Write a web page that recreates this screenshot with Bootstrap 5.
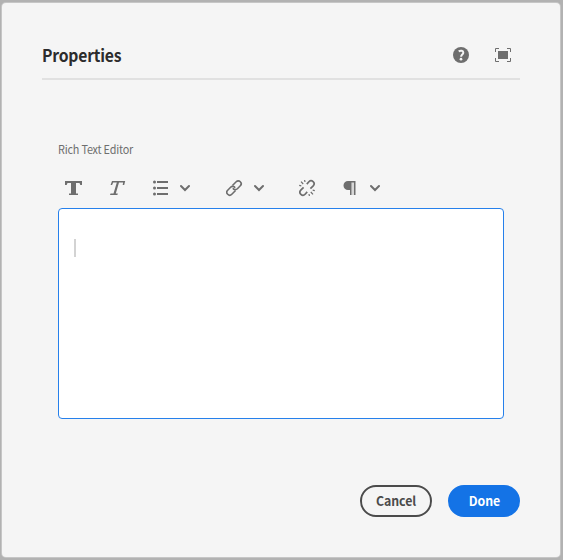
<!DOCTYPE html>
<html lang="en">
<head>
<meta charset="utf-8">
<meta name="viewport" content="width=device-width, initial-scale=1">
<title>Properties</title>
<link href="https://cdn.jsdelivr.net/npm/bootstrap@5.3.0/dist/css/bootstrap.min.css" rel="stylesheet">
<style>
body{background:#b2b2b2;font-family:"Noto Sans CJK SC","Open Sans",sans-serif;height:560px;padding:3px 3px 3px 2px;overflow:hidden}
.dialog-panel{background:#f5f5f5;border-radius:4px;height:554px;padding:29px 40px 40px;box-shadow:0 0 0 1px #c6c6c6}
.dialog-head{height:48px;border-bottom:2px solid #e1e1e1;padding-right:9px;gap:26px}
.dialog-title{font-size:16.500px;line-height:24px;font-weight:700;color:#2c2c2c;letter-spacing:-.2px;transform:scaleX(.95);transform-origin:left}
.dialog-body{padding:60px 16px 0}
.field-label{font-size:11.500px;line-height:19px;color:#6e6e6e;letter-spacing:-.2px;transform:scaleX(.94);transform-origin:left}
.tools{height:18px;margin-top:20px;padding-left:7px;color:#6e6e6e}
.tool{padding:0;border:0;background:none;color:#6e6e6e;display:flex;width:18px;height:18px}
.tool-head{width:16px}
.tool-arrow{width:10px}
.gap-a{margin-left:26px}.gap-b{margin-left:9px}.gap-c{margin-left:36px}.gap-d{margin-left:10px}.gap-e{margin-left:35px}
.ic{display:block;fill:currentColor}
.ic-line{fill:none;stroke:currentColor}
.editor{height:211px;margin-top:11px;background:#fff;border:1px solid #2680eb;border-radius:4px;padding:30px 15px}
.caret{width:2px;height:18px;background:#d3d3d3}
.actions{gap:16px}
.pill{width:72px;height:32px;border-radius:16px;border-width:2px;padding:0;font-size:13px;line-height:28px;font-weight:700;letter-spacing:-.1px}
.pill span{display:inline-block;transform:scaleX(.95)}
.pill-outline{color:#4b4b4b;border-color:#4b4b4b}
.pill-fill{color:#fff;background:#1473e6;border-color:#1473e6}
</style>
</head>
<body>
<main class="dialog-panel d-flex flex-column">
  <header class="dialog-head d-flex align-items-center">
    <h1 class="dialog-title mb-0 me-auto">Properties</h1>
    <button class="tool tool-head" aria-label="Help"><svg class="ic" width="16" height="18" viewBox="0 0 16 18"><circle cx="8" cy="9" r="8"/><path d="M5.700 5.400C7.600 4.100 10.400 4.700 10.300 6.700c0 1.800-2.200 2-2.200 4" fill="none" stroke="#f5f5f5" stroke-width="2"/><circle cx="8" cy="13.200" r="1.350" fill="#f5f5f5"/></svg></button>
    <button class="tool tool-head" aria-label="Full screen"><svg class="ic" width="16" height="18" viewBox="0 0 16 18"><path d="M3 5h10v8H3z"/><path class="ic-line" d="M.5 6V2.500H4M12 2.500h3.500V6M15.500 12v3.500H12M4 15.500H.5V12"/></svg></button>
  </header>
  <section class="dialog-body">
    <div class="field-label">Rich Text Editor</div>
    <div class="tools d-flex align-items-center">
      <button class="tool" aria-label="Bold"><svg class="ic" width="18" height="18"><path d="M0 2h17v4h-1.700L14.500 4H11v10.500h2V16H4v-1.500h2V4H2.500L1.700 6H0z"/></svg></button>
      <button class="tool gap-a" aria-label="Italic"><svg class="ic" width="18" height="18"><path d="M3 2h13.200L15.200 6h-1.500l.4-2.400H10L6.800 14.500h2L8.400 16H1l.5-1.500h3L7.800 3.600H4.200L3.100 6H1.600z"/></svg></button>
      <button class="tool gap-a" aria-label="List"><svg class="ic" width="18" height="18"><path d="M4 2h11v2H4zM4 8h11v2H4zM4 14h11v2H4z"/><circle cx="1.500" cy="3" r="1.500"/><circle cx="1.500" cy="9" r="1.500"/><circle cx="1.500" cy="15" r="1.500"/></svg></button>
      <button class="tool tool-arrow gap-b" aria-label="List options"><svg class="ic ic-line" width="10" height="18"><path d="M1 7l4 4 4-4" stroke-width="2" stroke-linecap="round"/></svg></button>
      <button class="tool gap-c" aria-label="Link"><svg class="ic ic-line" width="18" height="18"><g transform="rotate(-45 8 9)" stroke-width="1.600"><path d="M7 10.900H1.700a2.900 2.900 0 0 1 0-5.800h4.100a2.900 2.900 0 0 1 2.900 3.500" transform="translate(.3 1)"/><path d="M9 7.100h5.300a2.900 2.900 0 0 1 0 5.800h-4.100a2.900 2.900 0 0 1-2.900-3.500" transform="translate(-.3 -1)"/></g></svg></button>
      <button class="tool tool-arrow gap-d" aria-label="Link options"><svg class="ic ic-line" width="10" height="18"><path d="M1 7l4 4 4-4" stroke-width="2" stroke-linecap="round"/></svg></button>
      <button class="tool gap-e" aria-label="Unlink"><svg class="ic ic-line" width="18" height="18"><path stroke-width="1.700" d="M7.800 5.100l2.100-2.300a2.950 2.950 0 0 1 4.300 4.100L11.400 9.700M8.200 12.900l-2.100 2.300a2.950 2.950 0 0 1-4.300-4.100L4.600 8.300"/><path stroke-width="1.200" d="M5.600 1l.4 2M2 2.700l2.200 2.300M.2 6.400l2.100.4M10.400 17l-.4-2M14 15.300l-2.200-2.300M15.800 11.600l-2.100-.4"/></svg></button>
      <button class="tool gap-a" aria-label="Paragraph"><svg class="ic" width="18" height="18"><path d="M5 2h7.500v14H11V3.500H8.500V16H7v-5H5A4.500 4.500 0 0 1 5 2z"/><path d="M8.500 3h2.500v13H8.500z" opacity=".22"/></svg></button>
      <button class="tool tool-arrow gap-b" aria-label="Paragraph options"><svg class="ic ic-line" width="10" height="18"><path d="M1 7l4 4 4-4" stroke-width="2" stroke-linecap="round"/></svg></button>
    </div>
    <div class="editor"><div class="caret"></div></div>
  </section>
  <footer class="actions d-flex justify-content-end mt-auto">
    <button class="btn pill pill-outline"><span>Cancel</span></button>
    <button class="btn pill pill-fill"><span>Done</span></button>
  </footer>
</main>
<script src="https://cdn.jsdelivr.net/npm/bootstrap@5.3.0/dist/js/bootstrap.bundle.min.js"></script>
</body>
</html>
